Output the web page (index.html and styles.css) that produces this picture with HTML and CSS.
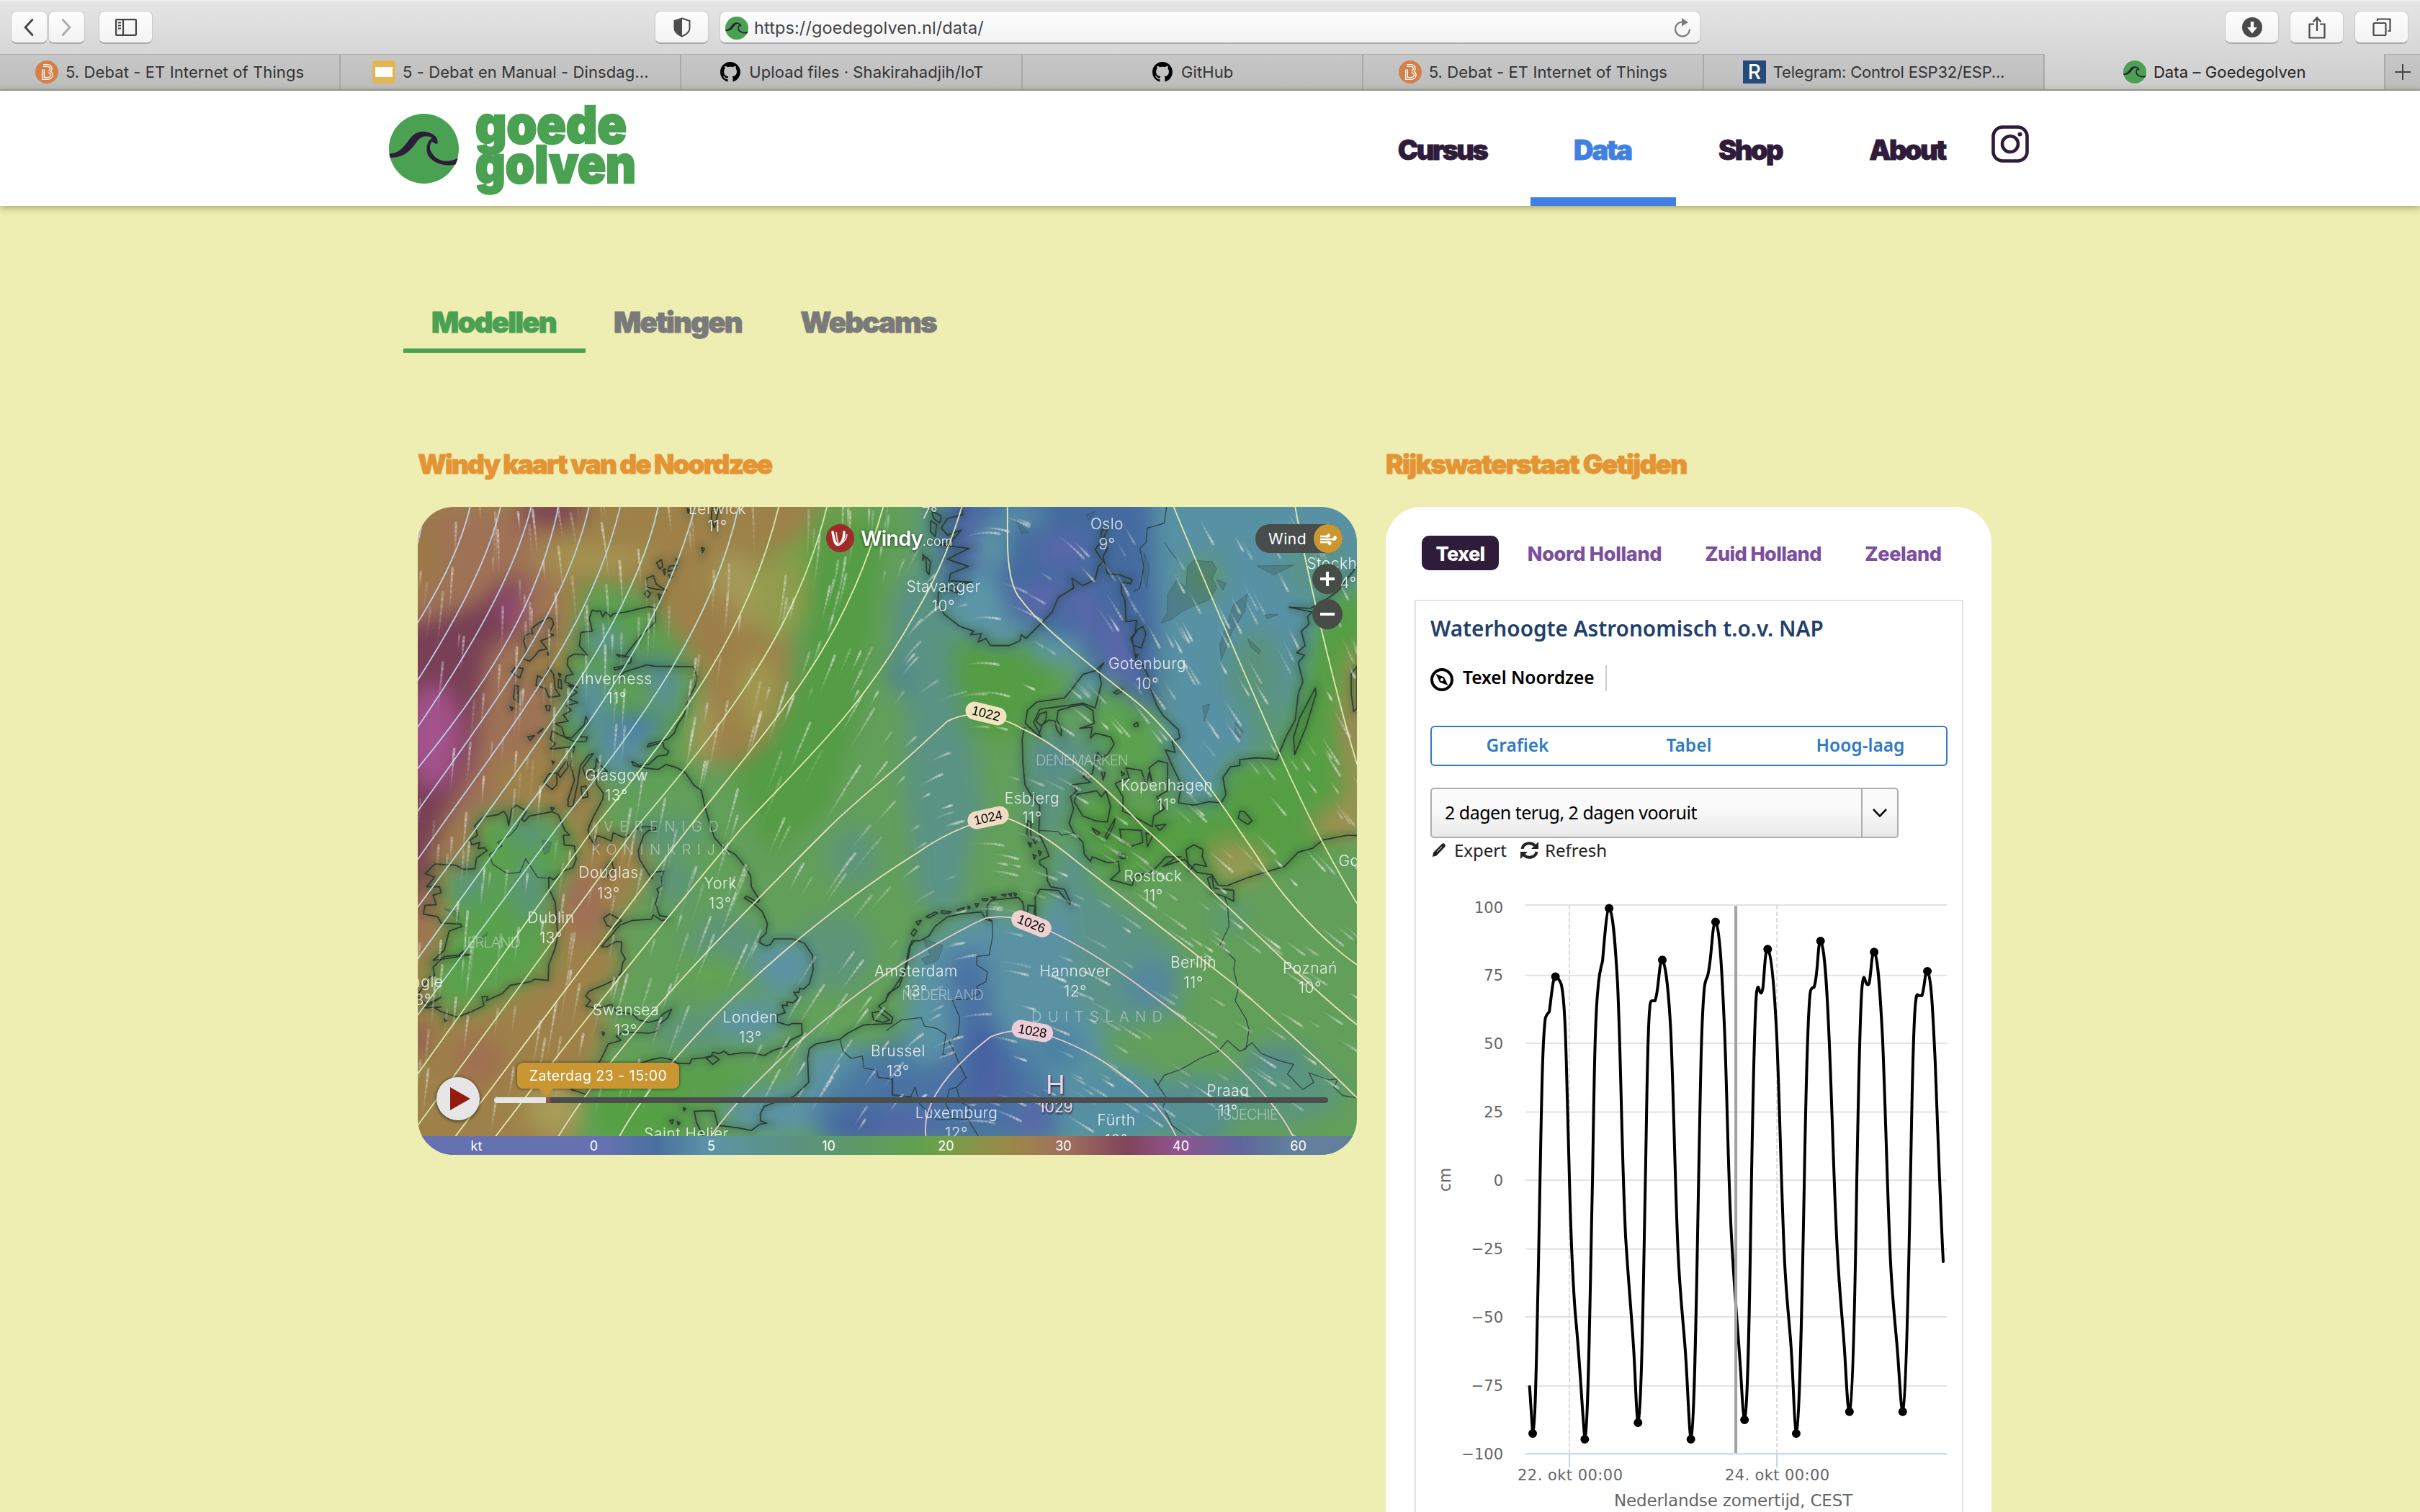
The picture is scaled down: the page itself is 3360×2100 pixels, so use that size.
FILE: index.html
```html
<!DOCTYPE html>
<html lang="nl">
<head>
<meta charset="utf-8">
<title>Data – Goedegolven</title>
<link rel="stylesheet" href="styles.css">
</head>
<body>
<svg width="0" height="0" class="defs">
  <defs>
    <symbol id="wave" viewBox="0 0 97 97">
      <circle cx="48.5" cy="48.5" r="48.5" fill="#4aa152"/>
      <path fill="#2f1b3a" d="M.5 55.5C14 55 20 47 28 36C36 25 44 24 51 25C62 27 69 33 67.5 41.5C65 42.5 62 40 59.5 38.500C56 44 56 50 60 55C66 65 80 70 96 61.500L92.500 70.500C76 74 60 68 54 57C51 49 52 39 60 33.500C55 30 46 30 40 37C32 48 24 61 1.500 61Z"/>
    </symbol>
    <symbol id="github" viewBox="0 0 16 16"><path d="M8 0C3.58 0 0 3.58 0 8c0 3.54 2.29 6.53 5.47 7.59.4.07.55-.17.55-.38 0-.19-.01-.82-.01-1.49-2.01.37-2.53-.49-2.69-.94-.09-.23-.48-.94-.82-1.13-.28-.15-.68-.52-.01-.53.63-.01 1.08.58 1.23.82.72 1.21 1.87.87 2.33.66.07-.52.28-.87.51-1.07-1.78-.2-3.64-.89-3.64-3.95 0-.87.31-1.59.82-2.15-.08-.2-.36-1.02.08-2.12 0 0 .67-.21 2.2.82.64-.18 1.32-.27 2-.27.68 0 1.36.09 2 .27 1.53-1.04 2.2-.82 2.2-.82.44 1.1.16 1.92.08 2.12.51.56.82 1.27.82 2.15 0 3.07-1.87 3.75-3.65 3.95.29.25.54.73.54 1.48 0 1.07-.01 1.93-.01 2.2 0 .21.15.46.55.38A8.01 8.01 0 0 0 16 8c0-4.42-3.58-8-8-8Z"/></symbol>
  </defs>
</svg>

<header class="toolbar">
  <div class="tools">
    <div class="pair">
      <button class="btn half" aria-label="Terug"><svg width="51" height="46" viewBox="0 0 51 46"><path d="M30 12L20 23L30 34" fill="none" stroke="#444" stroke-width="3" stroke-linecap="round"/></svg></button>
      <button class="btn half" aria-label="Vooruit"><svg width="51" height="46" viewBox="0 0 51 46"><path d="M20 12L30 23L20 34" fill="none" stroke="#aaa" stroke-width="3" stroke-linecap="round"/></svg></button>
    </div>
    <button class="btn side" aria-label="Navigatiekolom"><svg width="30" height="24" viewBox="0 0 30 24" fill="none" stroke="#444" stroke-width="2.200"><rect x="1.100" y="1.100" width="27.800" height="21.800" rx="1"/><path d="M11 1V23M4 5.500H8M4 9.500H8M4 13.500H8"/></svg></button>
  </div>
  <div class="address">
    <button class="btn side" aria-label="Privacy"><svg width="24" height="28" viewBox="0 0 24 28"><path d="M12 1.500L22.500 5V15C22.500 20 18 24 12 26.500C6 24 1.500 20 1.500 15V5Z" fill="none" stroke="#4d4d4d" stroke-width="2"/><path d="M12 1.500V26.500C6 24 1.500 20 1.500 15V5Z" fill="#4d4d4d"/></svg></button>
    <div class="url">
      <svg class="fav"><use href="#wave"/></svg>
      <span>https://goedegolven.nl/data/</span>
      <svg class="reload" width="26" height="28" viewBox="0 0 26 28"><path d="M12 5.500A10 10 0 1 0 23 15.500" fill="none" stroke="#7a7a7a" stroke-width="2.200"/><path d="M12 0L21 6L12 11.500Z" fill="#7a7a7a"/></svg>
    </div>
  </div>
  <div class="tools right">
    <button class="btn wide" aria-label="Downloads"><svg width="28" height="28" viewBox="0 0 28 28"><circle cx="14" cy="14" r="14" fill="#4a4a4a"/><path d="M11.800 6H16.200V14H21L14 22.500L7 14H11.800Z" fill="#fff"/></svg></button>
    <button class="btn wide" aria-label="Deel"><svg width="24" height="32" viewBox="0 0 24 32" fill="none" stroke="#4a4a4a" stroke-width="2.200"><path d="M8 11.500H1.500V30.500H22.500V11.500H16M12 21V3M6.500 8.500L12 2.500L17.500 8.500"/></svg></button>
    <button class="btn wide" aria-label="Tabbladen"><svg width="26" height="26" viewBox="0 0 26 26" fill="none" stroke="#4a4a4a" stroke-width="2.200"><rect x="1.500" y="7" width="17" height="17" rx="1.500"/><path d="M7 4V1.500H24.500V18H21.500"/></svg></button>
  </div>
</header>
<nav class="tabs">
  <div class="tab"><svg class="fav" viewBox="0 0 32 32"><circle cx="16" cy="16" r="16" fill="#d4804a"/><path d="M11 7H17C23 7 23 15 18 15.500C25 16 24 25 17 25H11V12.500" fill="none" stroke="#fff" stroke-width="4"/><path d="M11 7H17C23 7 23 15 18 15.500C25 16 24 25 17 25H11V12.500" fill="none" stroke="#d4804a" stroke-width="1.300"/></svg><span>5. Debat - ET Internet of Things</span></div>
  <div class="tab"><svg class="fav" viewBox="0 0 32 32"><rect width="32" height="32" rx="4" fill="#e3b653"/><rect x="4" y="9" width="24" height="14" fill="#fff"/></svg><span>5 - Debat en Manual - Dinsdag...</span></div>
  <div class="tab"><svg class="fav git"><use href="#github"/></svg><span>Upload files · Shakirahadjih/IoT</span></div>
  <div class="tab"><svg class="fav git"><use href="#github"/></svg><span>GitHub</span></div>
  <div class="tab"><svg class="fav" viewBox="0 0 32 32"><circle cx="16" cy="16" r="16" fill="#d4804a"/><path d="M11 7H17C23 7 23 15 18 15.500C25 16 24 25 17 25H11V12.500" fill="none" stroke="#fff" stroke-width="4"/><path d="M11 7H17C23 7 23 15 18 15.500C25 16 24 25 17 25H11V12.500" fill="none" stroke="#d4804a" stroke-width="1.300"/></svg><span>5. Debat - ET Internet of Things</span></div>
  <div class="tab tight"><i class="fav r">R</i><span>Telegram: Control ESP32/ESP...</span></div>
  <div class="tab current"><svg class="fav"><use href="#wave"/></svg><span>Data – Goedegolven</span></div>
  <div class="tab plus"><svg width="22" height="22" viewBox="0 0 22 22"><path d="M11 0V22M0 11H22" stroke="#444" stroke-width="2"/></svg></div>
</nav>

<div class="site-head">
  <a class="logo">
    <svg width="97" height="97"><use href="#wave"/></svg>
    <svg class="wordmark" width="228" height="130" viewBox="0 0 228 130"><text x="0" y="58" textLength="210" lengthAdjust="spacingAndGlyphs">goede</text><text x="0" y="112.500" textLength="223" lengthAdjust="spacingAndGlyphs">golven</text></svg>
  </a>
  <nav class="menu">
    <a class="m1">Cursus</a><a class="m2 active">Data</a><a class="m3">Shop</a><a class="m4">About</a>
    <svg class="insta" width="52" height="52" viewBox="0 0 52 52" fill="none" stroke="#2f1b3a"><rect x="2.500" y="2.500" width="47" height="47" rx="13" stroke-width="4.600"/><circle cx="26" cy="26" r="11" stroke-width="4.600"/><circle cx="39.500" cy="12.500" r="3" fill="#2f1b3a" stroke="none"/></svg>
  </nav>
</div>

<main>
  <nav class="subtabs"><a class="active s1">Modellen</a><a class="s2">Metingen</a><a class="s3">Webcams</a></nav>
  <div class="columns">
    <section class="left">
      <h2 class="h-windy">Windy kaart van de Noordzee</h2>
      <div class="map">
        <svg class="chartmap" width="1304" height="900" viewBox="580 704 1304 900">
          <defs>
            <filter id="soft" x="-10%" y="-10%" width="120%" height="120%" color-interpolation-filters="sRGB"><feGaussianBlur stdDeviation="15"/></filter>
            <filter id="glow" color-interpolation-filters="sRGB"><feGaussianBlur stdDeviation="5"/></filter>
            <g id="coast">
              <g transform="translate(570 690) scale(.44643 .33333)">
                <path d="M560 530L556 505L565 472L580 478L590 474L598 500L606 480L615 490L622 500L630 488L670 480L700 470L740 458L762 462L762 520L740 550L712 585L680 640L668 662L640 658L650 668L686 666L686 690L660 705L632 712L636 722L662 710L655 735L640 760L665 730L700 715L735 700L760 706L880 708L891 750L885 790L865 840L850 910L830 950L820 985L800 1010L770 1020L740 1030L736 1042L785 1022L788 1045L803 1060L797 1076L770 1080L740 1115L712 1120L688 1102L694 1120L740 1132L770 1136L795 1115L830 1130L855 1150L880 1200L905 1225L915 1290L930 1360L945 1420L975 1465L1010 1490L1040 1540L1058 1580L1060 1625L1085 1680L1080 1690L1045 1664L1038 1672L1070 1698L1095 1730L1110 1780L1105 1820L1088 1840L1086 1858L1106 1872L1120 1865L1130 1842L1190 1842L1225 1860L1250 1910L1252 1970L1240 2030L1222 2052L1210 2048L1208 2065L1192 2064L1205 2090L1190 2108L1170 2105L1172 2120L1155 2118L1165 2150L1140 2160L1140 2188L1175 2202L1185 2195L1216 2195L1218 2240L1180 2265L1170 2290L1130 2305L1100 2328L1060 2317L1030 2317L990 2325L975 2310L960 2320L940 2315L935 2330L910 2338L875 2342L868 2362L830 2360L810 2345L780 2337L750 2345L720 2358L690 2400L600 2450L560 2465L545 2490L520 2478L500 2470L560 2400L590 2350L615 2280L655 2265L640 2248L660 2230L740 2235L765 2228L772 2200L800 2170L812 2135L785 2155L770 2180L740 2190L710 2180L690 2155L640 2145L625 2115L600 2125L575 2130L545 2122L560 2100L545 2080L555 2060L600 2035L640 2010L655 1980L660 1940L668 1925L655 1895L657 1855L640 1853L610 1875L593 1875L620 1835L650 1785L690 1765L750 1760L755 1742L780 1765L798 1762L798 1750L775 1745L768 1720L762 1695L772 1650L766 1635L782 1620L780 1585L788 1560L755 1565L750 1592L740 1570L712 1510L708 1475L725 1410L740 1390L762 1388L762 1376L712 1374L690 1400L665 1420L630 1400L625 1435L600 1420L580 1412L572 1450L555 1415L552 1385L570 1330L598 1260L600 1235L580 1200L575 1150L612 1145L585 1110L578 1090L575 1130L555 1150L545 1165L535 1130L568 1070L555 1075L528 1120L520 1190L505 1290L490 1290L490 1260L510 1180L498 1120L510 1040L435 1052L450 1030L435 1010L440 975L460 990L480 1000L500 1005L540 950L545 915L552 935L545 960L525 1000L550 1000L545 1020L510 1020L480 1003L470 960L450 945L490 935L475 910L500 890L485 870L520 858L490 840L518 815L490 785L520 795L480 770L485 745L505 740L487 700L490 670L510 655L550 660L525 620L530 565L565 560Z"/>
                <path d="M440 510L445 530L430 570L445 575L425 590L405 600L425 635L400 640L385 665L370 685L350 675L360 640L352 600L358 575L380 568L375 550L400 525L430 503ZM325 710L350 715L340 755L315 730ZM325 785L335 790L333 855L320 840ZM430 712L445 740L450 800L465 830L430 835L420 800L390 785L395 745L415 760ZM485 1100L490 1125L465 1170L458 1150ZM455 1150V1200L440 1220L415 1190L430 1155ZM735 340L755 328L765 365L795 390L750 382L735 375ZM735 390L747 402L738 420L728 405ZM770 405L780 410L775 430ZM785 305L792 300L790 325ZM805 290L828 285L820 305L800 310ZM765 275L780 262L785 290L775 300ZM825 258L833 262L828 275ZM803 325L813 330L808 342ZM905 212L914 215L908 232ZM938 45L960 45L945 130L935 90ZM860 50L868 55L864 68ZM530 1210L545 1205L552 1250L535 1255ZM420 870L435 870L432 892L424 890ZM365 1000L385 995L372 1015ZM395 985L412 965L408 975ZM460 735L468 740L464 752ZM460 760L468 762L470 800L460 795ZM310 875L320 880L314 890ZM435 1295L448 1297L440 1307ZM425 648L431 652L428 660ZM440 1100L447 1105L442 1114ZM605 1545L625 1515L632 1550L610 1585ZM600 1755L620 1738L655 1765L630 1798L610 1785ZM920 2340L942 2328L960 2345L940 2365ZM596 2230L603 2235L599 2246ZM806 2600L818 2595L813 2613ZM830 2603L838 2610L832 2618ZM848 2545L856 2550L851 2558ZM105 2175L112 2182L107 2188Z"/>
                <path d="M475 1410L478 1450L510 1455L515 1510L505 1545L475 1560L445 1595L430 1585L430 1630L450 1690L458 1830L450 1880L430 1950L428 2015L385 2010L375 2020L310 2035L285 2070L235 2100L240 2082L222 2083L228 2120L190 2145L145 2168L95 2145L75 2130L95 2125L45 2130L95 2085L50 2115L20 2080L60 2000L75 1995L70 1960L105 1915L150 1910L165 1892L160 1905L188 1908L130 1920L70 1932L105 1890L120 1810L160 1790L155 1780L95 1776L85 1750L40 1738L45 1702L80 1700L70 1660L95 1650L90 1625L50 1625L75 1585L45 1570L75 1530L140 1535L165 1552L200 1550L205 1505L238 1475L230 1462L210 1465L215 1440L190 1450L185 1430L208 1410L200 1370L225 1335L270 1325L290 1310L300 1330L305 1370L315 1300L330 1285L360 1310L345 1345L355 1352L370 1330L440 1312L460 1325L480 1390L495 1410Z"/>
                <path d="M1568 1850L1555 1870L1545 1940L1530 2000L1520 2040L1485 2070L1478 2100L1455 2122L1500 2170L1495 2195L1410 2200L1360 2235L1335 2260L1260 2280L1240 2300L1235 2340L1238 2440L1215 2470L1190 2500L1140 2520L1100 2540L1088 2570V2600L1108 2610L1085 2615L1060 2640L1020 2630L965 2620L955 2622L945 2560L930 2558L882 2560L890 2610L910 2664M1435 2150L1455 2145L1490 2180L1470 2190L1440 2180Z"/>
              </g>
              <g transform="translate(1230 690) scale(.42729 .33333)">
                <path d="M245 42L250 75L200 90L180 130L200 160L245 138L210 190L175 200L270 215L230 240L200 260L268 290L210 320L205 350L280 355L215 370L240 405L190 380L170 400V450L190 490L240 540L285 560L275 575L310 570L300 605L325 590L340 620L400 620L435 600L440 575L455 590L510 520L540 480L560 420L610 380L605 340L640 370L680 345L690 290L705 270L680 220L698 190L700 140L722 130L708 170L720 215L705 250L720 320L760 325L800 345L795 362L765 355L765 400L777 430L780 520L815 515L810 560L835 540L845 570L830 630L805 620L795 590L820 550L800 590L812 680L830 690L850 740L860 800L880 870L900 910L950 970L955 1005L930 1020L940 1065L908 1055L930 1120L960 1200L950 1275L1000 1285L1050 1270L1090 1275L1105 1240L1095 1170L1120 1125L1150 1120V1095L1200 1088L1240 1090L1270 1095L1300 1000L1330 930L1340 820L1355 770L1340 690L1360 660L1335 650L1362 620L1350 560L1375 530L1370 500L1385 480L1310 460L1380 465L1440 420L1470 390L1500 340L1531 290"/>
                <path d="M453 945L460 890L490 855L580 838L605 800L640 740L680 725L708 692L692 725L700 780L680 880L640 860L600 868L560 875L500 885L480 940L495 975L505 1005ZM450 960L443 1010L445 1110L452 1200L470 1240L500 1290L497 1400L525 1480L530 1498L500 1515L500 1530L522 1550L525 1600L535 1625L580 1635L600 1690L598 1698L560 1640L500 1635L485 1670L487 1750L480 1750L485 1705L462 1702L460 1735L450 1730L445 1690L430 1670L345 1680L330 1700L328 1750L345 1768L325 1760L310 1730L250 1737L200 1750L160 1790L140 1830L110 1850L85 1850L75 1880L60 1980L30 2040L0 2090M495 1000L508 950L530 930L550 935L555 970L570 995V965L555 930L560 890L600 875L640 865L672 890L677 945L630 965L670 960L665 1005L680 985L730 1000L742 1030L720 1075L700 1085L688 1065L670 1155L640 1165L665 1190L605 1200L620 1225L600 1250L610 1300L595 1360L610 1400L640 1440L645 1490L665 1520L670 1500L720 1525L755 1520L760 1560L730 1595L800 1620L810 1580L860 1565L890 1530L910 1500L960 1500L940 1505L900 1540L970 1510L1010 1565L1060 1575L1080 1620L1110 1620L1180 1585L1295 1540L1340 1480L1385 1465L1420 1430L1500 1410L1531 1412M1045 1590L1060 1580L1065 1630L1130 1640L1130 1685L1100 1665L1060 1650Z"/>
                <path d="M620 1240L685 1225L700 1250L715 1225L730 1290L720 1355L680 1350L640 1330L612 1270ZM780 1130L830 1140L840 1180L848 1200L855 1150L865 1190L855 1130L885 1100L915 1110V1225L880 1250L905 1300L870 1330L865 1375L830 1350L795 1325L770 1310V1250L745 1195L790 1170ZM760 1385L830 1390L835 1440L800 1455L765 1430ZM745 1340L740 1370L718 1425L712 1415ZM845 1400L868 1410L850 1458ZM1150 1310L1165 1312L1190 1350L1175 1365L1145 1340ZM670 1380L695 1400L685 1410ZM700 1140L712 1150L706 1180ZM765 1145L775 1155L768 1163ZM875 1370L910 1365L890 1390ZM740 815L765 798L770 808L750 822ZM805 948L818 940L820 955L808 958ZM752 1485L775 1490L780 1505L765 1508ZM975 1470L1000 1450L1030 1470L1028 1500L1042 1540L1005 1530L985 1560ZM1395 797L1398 820L1365 960L1328 1075L1325 1000L1345 920ZM1531 705L1512 740V820L1520 895L1531 880ZM145 100L165 115L160 165L145 145ZM150 60L180 80L175 110L155 90ZM130 250L145 270L140 325L132 310ZM120 240L126 250L120 265ZM810 655L820 658L815 668ZM500 905L522 895L520 930L505 955L488 935ZM460 1350L472 1355L470 1420L458 1410ZM475 1420L492 1430L485 1445ZM462 1440L472 1445L470 1460ZM495 1475L505 1480L500 1495ZM478 1490L487 1495L482 1510ZM130 1750L160 1730L168 1735L140 1755ZM180 1725L212 1728L205 1735L180 1735ZM232 1720L255 1712L250 1725L235 1727ZM266 1705L274 1710L268 1718ZM290 1695L302 1695L295 1710ZM312 1675L332 1675L328 1682L315 1683ZM342 1668L358 1668L352 1676ZM376 1658L390 1656L388 1665ZM398 1655L408 1652L408 1665ZM415 1650L425 1655L420 1665ZM98 1770L115 1765L105 1785ZM82 1820L92 1800L100 1810L90 1830Z"/>
              </g>
            </g>
          </defs>
          <g filter="url(#soft)">
            <rect x="520" y="650" width="1420" height="1010" fill="#629f5a"/>
            <g transform="translate(570 690) scale(.44643 .33333)">
              <path fill="#9d8149" d="M-100 -100H1290L1240 150L1090 260L1080 420L1190 540L1170 900L1090 1130L900 1100L620 1130L600 1250L570 1400L720 1430L740 1560L700 1680L620 1780L640 1900L660 2000L560 2080L620 2200L560 2400L520 2500L500 2800H-100Z"/>
              <path fill="#9f7256" d="M60 50H300L420 150L470 560L330 700L440 800L440 1000L250 1150L300 1290L160 1400L80 1500H200L100 1300L0 1300V50Z"/>
              <path fill="#78a048" d="M1130 250L1290 60L1400 0V500L1250 560L1200 420Z"/>
              <path fill="#549c45" d="M1260 100H1480L1440 500L1400 900L1300 1300L1120 1500L1000 1150L1120 1000L1220 700L1240 400Z"/>
              <ellipse cx="1150" cy="420" rx="80" ry="180" fill="#909c4d"/><ellipse cx="1010" cy="400" rx="70" ry="170" fill="#a59b58"/>
              <ellipse cx="960" cy="560" rx="60" ry="160" fill="#9d7f49"/><ellipse cx="900" cy="950" rx="40" ry="150" fill="#a69b58"/><ellipse cx="1080" cy="820" rx="60" ry="160" fill="#a09850"/>
              <ellipse cx="560" cy="260" rx="180" ry="60" fill="#a49450"/>
              <path fill="#783f55" d="M-60 560L200 460L300 340H350L350 560L240 630L210 950L190 1130L120 1290L60 1500V1700H-60Z"/>
              <ellipse cx="440" cy="60" rx="110" ry="60" fill="#7b4054"/>
              <ellipse cx="310" cy="470" rx="26" ry="80" fill="#9b4c84"/>
              <ellipse cx="70" cy="1000" rx="90" ry="220" fill="#a3528c"/>
              <ellipse cx="40" cy="250" rx="60" ry="160" fill="#9b7848"/>
              <path fill="#5c9f50" d="M545 350L720 380L770 480L860 640L900 760L860 1100L800 1180L600 1220L500 1080L450 1000L480 780L500 600Z"/>
              <g fill="#5a8f9f"><ellipse cx="600" cy="600" rx="60" ry="50"/><ellipse cx="560" cy="860" rx="60" ry="130"/><ellipse cx="650" cy="1060" rx="90" ry="110"/><ellipse cx="790" cy="800" rx="45" ry="100"/><ellipse cx="730" cy="700" rx="100" ry="30" fill="#4f7f96"/><ellipse cx="700" cy="955" rx="90" ry="50" fill="#4a7cab"/></g>
              <path fill="#5aa14e" d="M210 1310H460L520 1480L440 1700L430 1980L230 2120L90 2160L60 2000L120 1800L90 1560L200 1520Z"/>
              <g fill="#5a937f"><ellipse cx="370" cy="1400" rx="60" ry="60"/><ellipse cx="370" cy="1640" rx="50" ry="120"/><ellipse cx="180" cy="1620" rx="50" ry="80"/></g>
              <ellipse cx="540" cy="1700" rx="60" ry="150" fill="#a06e58"/><ellipse cx="30" cy="1760" rx="30" ry="160" fill="#a06a58"/>
              <ellipse cx="210" cy="2350" rx="80" ry="110" fill="#a07050"/><ellipse cx="25" cy="2260" rx="25" ry="80" fill="#8b4d54"/>
              <ellipse cx="450" cy="2560" rx="90" ry="110" fill="#a79b57"/>
              <g fill="#5d957a"><ellipse cx="820" cy="1600" rx="60" ry="110"/><ellipse cx="980" cy="1870" rx="120" ry="130"/><ellipse cx="880" cy="2230" rx="120" ry="90"/><ellipse cx="1380" cy="1500" rx="80" ry="130"/><ellipse cx="1320" cy="1900" rx="120" ry="160"/><ellipse cx="800" cy="1400" rx="120" ry="60"/></g>
              <g fill="#5c93a4"><ellipse cx="1160" cy="1960" rx="90" ry="120"/><ellipse cx="1060" cy="2180" rx="110" ry="90"/><ellipse cx="1330" cy="2400" rx="120" ry="170"/><ellipse cx="1150" cy="2560" rx="180" ry="100"/></g>
              <ellipse cx="930" cy="1980" rx="90" ry="70" fill="#62a453"/><ellipse cx="900" cy="2440" rx="180" ry="90" fill="#5aa04c"/><ellipse cx="700" cy="2550" rx="150" ry="150" fill="#55a044"/>
              <ellipse cx="1330" cy="2200" rx="120" ry="90" fill="#62a25a"/>
              <path fill="#4a78a2" d="M1400 2330L1600 2200V2700H1280L1250 2560Z"/><ellipse cx="1430" cy="2620" rx="130" ry="70" fill="#4863a0"/><ellipse cx="1500" cy="2640" rx="60" ry="50" fill="#6368ae"/>
              <ellipse cx="1550" cy="600" rx="50" ry="280" fill="#578f88"/><ellipse cx="1530" cy="740" rx="50" ry="60" fill="#4e8294"/>
            </g>
            <g transform="translate(1230 690) scale(.42729 .33333)">
              <path fill="#5a9383" d="M110 0H250L230 600L320 1300L200 1700H100L60 1200L80 600Z"/>
              <path fill="#456aa0" d="M180 -50H900L880 900L820 860L700 740L520 560L400 640L250 580L180 400Z"/>
              <path fill="#5891a3" d="M860 -50H1600V350L1420 420L1340 800L1280 1060L1120 1100L1080 1290L960 1270L900 960Z"/>
              <g fill="#5c96a6"><ellipse cx="430" cy="80" rx="90" ry="45"/><ellipse cx="340" cy="210" rx="60" ry="100"/><ellipse cx="300" cy="450" rx="90" ry="140"/><ellipse cx="400" cy="560" rx="70" ry="60"/><ellipse cx="560" cy="640" rx="90" ry="60"/><ellipse cx="660" cy="760" rx="50" ry="60"/></g>
              <g fill="#6266ad"><ellipse cx="570" cy="220" rx="70" ry="50"/><ellipse cx="510" cy="420" rx="90" ry="50"/><ellipse cx="650" cy="470" rx="30" ry="120"/><ellipse cx="740" cy="610" rx="34" ry="110"/><ellipse cx="790" cy="720" rx="34" ry="70"/><ellipse cx="270" cy="160" rx="26" ry="160" fill="#5560a6"/></g>
              <g fill="#609a68"><ellipse cx="1030" cy="340" rx="60" ry="90"/><ellipse cx="1200" cy="740" rx="90" ry="180" fill="#5a937c"/><ellipse cx="1240" cy="960" rx="60" ry="120" fill="#5c977a"/><ellipse cx="1400" cy="300" rx="110" ry="120" fill="#5a9388"/></g>
              <path fill="#549d43" d="M210 600L450 630L590 770L480 850L440 950L430 1020L260 980L230 760Z"/>
              <path fill="#5b9280" d="M470 980H640L720 1060L660 1180L600 1250L580 1420L480 1400L440 1200Z"/>
              <ellipse cx="640" cy="820" rx="40" ry="50" fill="#5c93a2"/><ellipse cx="540" cy="1080" rx="60" ry="70" fill="#558a90"/>
              <path fill="#59a24d" d="M700 860L780 850L900 1020L900 1090L780 1120L700 1020Z"/>
              <path fill="#559e44" d="M1100 1130L1280 1100L1350 850L1410 460L1550 380V1420L1300 1540L1100 1620L960 1500L720 1580L600 1360L700 1240L880 1320L1000 1300L1080 1290Z"/>
              <path fill="#9f9152" d="M1500 640L1560 640V1430L1400 1420L1380 1340L1490 1260L1470 950Z"/>
              <ellipse cx="1520" cy="960" rx="26" ry="90" fill="#a87c5a"/><ellipse cx="1150" cy="1530" rx="90" ry="80" fill="#9a9a52"/><ellipse cx="1110" cy="1470" rx="60" ry="40" fill="#9c9450"/>
              <g fill="#5a938a"><ellipse cx="200" cy="1550" rx="60" ry="200"/><ellipse cx="600" cy="1560" rx="60" ry="110"/></g>
              <path fill="#5a92a4" d="M80 1880L330 1720L480 1780L560 1640L640 1700L640 2000L720 2300L700 2700H300L60 2300Z"/>
              <path fill="#5b9389" d="M600 1560L800 1740L960 1900L960 2150L760 2220L620 2100Z"/>
              <ellipse cx="860" cy="2030" rx="80" ry="90" fill="#5587a0"/><ellipse cx="1270" cy="2340" rx="100" ry="50" fill="#53869a"/><ellipse cx="1120" cy="1760" rx="60" ry="40" fill="#5a9682"/>
              <ellipse cx="1280" cy="2480" rx="200" ry="130" fill="#5a957f"/><ellipse cx="1000" cy="2560" rx="140" ry="150" fill="#568f90"/>
              <ellipse cx="760" cy="2540" rx="160" ry="170" fill="#548fa2"/>
              <path fill="#4a72a4" d="M200 1900H320L360 2240L440 2300L480 2400L560 2480L560 2700H-40V2430L160 2360L230 2300Z"/>
              <g fill="#4560a0"><ellipse cx="320" cy="2290" rx="60" ry="100"/><ellipse cx="330" cy="2450" rx="80" ry="80"/><ellipse cx="30" cy="2640" rx="120" ry="60"/></g>
              <g fill="#6066ac"><ellipse cx="60" cy="2630" rx="110" ry="30"/><ellipse cx="350" cy="2440" rx="32" ry="30"/><ellipse cx="470" cy="2610" rx="50" ry="60"/></g>
              <ellipse cx="550" cy="2300" rx="90" ry="100" fill="#4d83a3"/>
            </g>
          </g>
          <use href="#coast" class="coast-glow" filter="url(#glow)"/>
          <use href="#coast" class="coast"/>
          <g class="border">
            <path transform="translate(570 690) scale(.44643 .33333)" d="M340 1350L330 1380L310 1410L270 1440L285 1455L245 1490L255 1530L300 1570L340 1565L358 1508L395 1585L430 1590M1335 2260L1345 2310L1370 2340L1405 2330L1410 2380L1450 2390L1455 2420L1500 2425V2495L1560 2500"/>
            <path transform="translate(1230 690) scale(.42729 .33333)" d="M912 42L905 110L850 130L845 190L825 215L838 290L825 380L805 395M500 1390L560 1395L570 1410L610 1400M1100 1665L1110 1700L1115 1790L1085 1870L1135 1930L1130 1970L1145 2050L1135 2100L1170 2175L1180 2220L1170 2300L1150 2310L1110 2265L1100 2280L1080 2310L1020 2340L960 2385L905 2410L885 2450L870 2425L915 2510L900 2540L930 2620L980 2664M1155 2310L1190 2275L1220 2320L1280 2350L1325 2365L1305 2405L1355 2470L1390 2440L1375 2400L1440 2430L1470 2425L1455 2460L1485 2495L1531 2505M345 1768L347 1830L335 1910L295 1915V1950L330 1980L325 2020L295 2040L305 2070L260 2095L215 2095L240 2170L235 2240L205 2270L225 2320L185 2325L195 2240L165 2215L125 2205L115 2170L50 2180L0 2225M225 2320L240 2370L260 2420L230 2460L240 2520L270 2540L265 2590L300 2664M230 2460L205 2470L195 2530L215 2590L265 2595M0 2420L20 2430V2490L80 2500L95 2460L110 2530L165 2595L215 2595"/>
          </g>
          <g class="lake">
            <path transform="translate(1230 690) scale(.42729 .33333)" d="M980 290L1000 265L1060 270L1075 300L1060 340L1075 380L1050 430L990 460L960 480L930 510L895 525L915 480L915 410L945 345L975 380ZM1175 405L1165 480L1125 560L1090 680L1085 620L1110 520L1130 450ZM1205 288L1325 285L1260 325ZM1075 345L1105 360L1095 390ZM1030 870L1052 865L1035 935ZM1135 940L1162 980L1150 1005L1135 990ZM1175 590L1218 640L1212 655L1185 625ZM905 190L945 260L930 240ZM840 235L855 290L848 380L836 320ZM420 95L465 150L440 150ZM650 75L680 60L660 100ZM1232 492L1275 490L1240 508ZM120 1840L185 1870L170 1930L130 1950L115 1925L145 1910Z"/>
            <path transform="translate(570 690) scale(.44643 .33333)" d="M410 1430L438 1440L430 1480L415 1490ZM105 1715L150 1730L150 1760L125 1735ZM215 1840L240 1815L230 1850Z"/>
          </g>
          <g class="iso" transform="translate(570 690) scale(.44643 .33333)">
            <g stroke="#bcd0e6"><path d="M48 42L22 195M185 42Q150 250 22 525M280 42Q230 330 22 765M375 42Q310 400 22 960M460 42C400 430 250 760 22 1132M555 42C480 480 260 860 22 1310M652 42C560 560 300 980 22 1512"/></g>
            <g stroke="#b9dfd8"><path d="M770 42C700 480 440 940 205 1380L22 1710M885 42C800 480 600 880 315 1380L22 1925M1020 42C940 520 740 900 455 1380L22 2160"/></g>
            <g stroke="#cdecae"><path d="M1145 42C1050 560 850 920 570 1380L22 2405M1295 42C1200 560 980 940 700 1380L22 2620"/></g>
            <g stroke="#e6e9ae"><path d="M1470 42C1350 620 1150 900 865 1380C650 1750 400 2200 140 2664M1568 490C1400 900 1200 1130 1030 1380C800 1750 500 2250 265 2664"/></g>
            <g stroke="#eadfc0"><path d="M1568 1060C1480 1170 1390 1260 1300 1380C1000 1780 650 2250 460 2664M1568 1490C1200 1800 800 2300 650 2664"/></g>
            <path stroke="#e8cccb" d="M1568 1915C1350 2080 1040 2450 935 2664"/>
          </g>
          <g class="iso" transform="translate(1230 690) scale(.42729 .33333)">
            <g stroke="#e6e9ae"><path d="M247 42C200 240 150 370 94 490M395 42V170C395 300 410 390 440 430C500 540 700 740 800 840C900 940 1000 1120 1090 1280L1207 1500C1300 1700 1450 1880 1531 1950"/></g>
            <g stroke="#dcecae"><path d="M935 42C1050 400 1180 780 1283 1080C1360 1300 1430 1480 1531 1695M1330 42C1380 400 1480 900 1531 1115"/></g>
            <g stroke="#ecdfbc"><path d="M94 1060L200 935Q240 908 300 905Q400 930 440 965C560 1030 700 1190 840 1380C1000 1560 1350 2020 1531 2200M94 1490C160 1430 220 1390 290 1360Q330 1330 400 1342Q500 1390 620 1520C800 1700 1000 1900 1130 2030C1300 2220 1450 2400 1531 2505"/></g>
            <g stroke="#e8cccb"><path d="M94 1915C180 1850 280 1780 325 1755Q400 1740 460 1770C650 1860 850 2060 1000 2210C1150 2370 1270 2530 1323 2664M130 2664C115 2530 200 2390 340 2250Q400 2220 430 2228L540 2250C700 2320 880 2490 943 2664"/></g>
          </g>
        </svg>
        <canvas class="wind" width="1304" height="874"></canvas>
        <svg class="labels" width="1304" height="874" viewBox="580 704 1304 874">
          <g class="pill"><g transform="translate(1369 991) rotate(14)"><rect x="-29" y="-12.500" width="58" height="25" rx="12.500" fill="#efe6c0"/><text y="6">1022</text></g>
          <g transform="translate(1372 1135.700) rotate(-12)"><rect x="-29" y="-12.500" width="58" height="25" rx="12.500" fill="#f0dcc4"/><text y="6">1024</text></g>
          <g transform="translate(1432 1283) rotate(22)"><rect x="-29" y="-12.500" width="58" height="25" rx="12.500" fill="#efd1d2"/><text y="6">1026</text></g>
          <g transform="translate(1433.400 1432) rotate(10)"><rect x="-29" y="-12.500" width="58" height="25" rx="12.500" fill="#edccd8"/><text y="6">1028</text></g></g>
          <g class="country"><text x="838" y="1155" textLength="160">VERENIGD</text><text x="821" y="1187" textLength="193">KONINKRIJK</text><text x="644" y="1316" textLength="79">IERLAND</text><text x="1438" y="1063" textLength="129">DENEMARKEN</text><text x="1252" y="1389" textLength="114">NEDERLAND</text><text x="1432" y="1419" textLength="182">DUITSLAND</text><text x="1686" y="1555" textLength="89">TSJECHIË</text></g>
          <g class="city">
            <text x="996" y="714">Lerwick</text><text x="996" y="738">11°</text><text x="1291" y="720">7°</text>
            <text x="856" y="950">Inverness</text><text x="856" y="977">11°</text><text x="856" y="1084">Glasgow</text><text x="856" y="1112">13°</text>
            <text x="1537" y="735">Oslo</text><text x="1537" y="763">9°</text><text x="1310" y="822">Stavanger</text><text x="1310" y="849">10°</text>
            <text x="1593" y="929">Gotenburg</text><text x="1593" y="957">10°</text><text x="1620" y="1098">Kopenhagen</text><text x="1620" y="1125">11°</text>
            <text x="1433" y="1116">Esbjerg</text><text x="1433" y="1143">11°</text><text x="1868" y="790">Stockholm</text><text x="1872" y="817">4°</text>
            <text x="845" y="1219">Douglas</text><text x="845" y="1248">13°</text><text x="1000" y="1234">York</text><text x="1000" y="1262">13°</text>
            <text x="765" y="1282">Dublin</text><text x="765" y="1310">13°</text><text x="869" y="1410">Swansea</text><text x="869" y="1438">13°</text>
            <text x="1042" y="1420">Londen</text><text x="1042" y="1448">13°</text><text x="1247" y="1467">Brussel</text><text x="1247" y="1495">13°</text>
            <text x="1272" y="1356">Amsterdam</text><text x="1272" y="1384">13°</text><text x="1493" y="1356">Hannover</text><text x="1493" y="1384">12°</text>
            <text x="1657" y="1344">Berlijn</text><text x="1657" y="1372">11°</text><text x="1819" y="1352">Poznań</text><text x="1819" y="1379">10°</text>
            <text x="1601" y="1224">Rostock</text><text x="1601" y="1251">11°</text><text x="1705" y="1522">Praag</text><text x="1705" y="1550">11°</text>
            <text x="1328" y="1553">Luxemburg</text><text x="1328" y="1581">12°</text><text x="1550" y="1563">Fürth</text><text x="1550" y="1591">10°</text>
            <text x="953" y="1582">Saint Helier</text><text x="1897" y="1203">Gdańsk</text><text x="583" y="1371">Dingle</text><text x="583" y="1396">13°</text>
          </g>
          <g class="high"><text x="1465.500" y="1519" font-size="36">H</text><text x="1466" y="1545" font-size="21">1029</text></g>
        </svg>
        <div class="brand"><svg width="39" height="39" viewBox="0 0 39 39"><circle cx="19.500" cy="19.500" r="19.500" fill="#a02a28"/><path d="M9 11C11 20 12 28 16 28.500C22 28 25 20 25 11" fill="none" stroke="#fff" stroke-width="3.500" stroke-linecap="round"/><path d="M14 11C15 20 16 25 17 28C24 27 28 21 29 14" fill="none" stroke="#f0c8c8" stroke-width="2"/></svg><b>Windy</b><small>.com</small></div>
        <div class="layer"><span>Wind</span><svg width="40" height="40" viewBox="0 0 40 40"><circle cx="20" cy="20" r="20" fill="#c99632"/><path d="M9 17H19.500M9 21H29M9 25H21" stroke="#fff" stroke-width="2.400"/><path d="M18 17C21 17 22 15.500 20.500 15M27 21C30.500 21 31 18 29 18M20 25C23.500 25 23.500 27 22 27.500" fill="none" stroke="#fff" stroke-width="3.500" stroke-linecap="round"/></svg></div>
        <div class="zoomers"><i><svg width="22" height="22" viewBox="0 0 22 22"><path d="M11 1V21M1 11H21" stroke="#fff" stroke-width="4"/></svg></i><i><svg width="22" height="22" viewBox="0 0 22 22"><path d="M1 11H21" stroke="#fff" stroke-width="4"/></svg></i></div>
        <div class="play"><svg width="28" height="32" viewBox="0 0 28 32"><path d="M0 0L28 16L0 32Z" fill="#951b11"/></svg></div>
        <div class="track"><i class="done"></i><i class="now"></i></div>
        <div class="stamp">Zaterdag 23 - 15:00</div>
        <div class="legend"><span>kt</span><span>0</span><span>5</span><span>10</span><span>20</span><span>30</span><span>40</span><span>60</span></div>
      </div>
    </section>
    <section class="right-col">
      <h2 class="h-rws">Rijkswaterstaat Getijden</h2>
      <div class="card">
        <nav class="regions"><a class="on">Texel</a><a>Noord Holland</a><a>Zuid Holland</a><a>Zeeland</a></nav>
        <div class="frame">
          <h3>Waterhoogte Astronomisch t.o.v. NAP</h3>
          <div class="place"><svg width="32" height="32" viewBox="0 0 32 32"><circle cx="16" cy="16" r="14" fill="none" stroke="#000" stroke-width="4"/><path d="M7.500 8L19 12.500L24.500 24L13 19.500Z"/><circle cx="16" cy="16" r="2.200" fill="#fff"/></svg><span>Texel Noordzee</span></div>
          <div class="seg"><span>Grafiek</span><span>Tabel</span><span>Hoog-laag</span></div>
          <div class="select"><span>2 dagen terug, 2 dagen vooruit</span><i><svg width="20" height="12" viewBox="0 0 20 12"><path d="M1 1L10 10.500L19 1" fill="none" stroke="#111" stroke-width="2.600"/></svg></i></div>
          <div class="links">
            <svg width="20" height="21" viewBox="0 0 20 21"><path d="M1 20L2 14L13.500 2.500Q16 0 18 2.500Q20 4.500 17.500 7L6.500 18.500Z" fill="#222"/><path d="M7 13L14 6" stroke="#fff" stroke-width="1"/></svg><span class="ex">Expert</span>
            <svg class="rf" width="25" height="24" viewBox="0 0 25 24"><path d="M2.500 10C4 1.500 15 0 20 5.500M22.500 14C21 22.500 10 24 5 18.500" fill="none" stroke="#222" stroke-width="4"/><path d="M25 0V10H15ZM0 24V14H10Z" fill="#222"/></svg><span class="re">Refresh</span>
          </div>
          <svg class="graph" width="752" height="842" viewBox="1968 1222 752 842">
            <g transform="translate(1940 1220) scale(.53571 .56122)" fill="none">
              <path class="ns" stroke="#e2e2e2" stroke-width="2" d="M332 66H1425M332 240H1425M332 408H1425M332 578H1425M332 747H1425M332 917H1425M332 1085H1425M332 1256H1425"/>
              <path class="ns" stroke="#dadada" stroke-width="2" stroke-dasharray="6 3" d="M446 66V1424M984 66V1424"/>
              <path class="ns" stroke="#c5d3ec" stroke-width="2" d="M332 1424H1425M446 1424V1458M984 1424V1458"/>
              <path class="ns" stroke="#000" stroke-width="4" stroke-linecap="round" stroke-linejoin="round" d="M343 1258L351 1374C358 1370 361 1170 365 1000L370 747C374 560 376 400 384 345Q386 338 394 330C400 290 403 245 410 243Q418 245 425 262C437 310 438 470 445 700C450 900 455 1010 463 1095C472 1180 478 1300 486 1388C495 1380 500 1000 506 747C510 520 512 350 520 275Q523 235 532 205C537 150 543 75 549 74C560 80 566 180 571 260C580 450 582 700 592 890C600 1010 608 1090 613 1170C618 1250 620 1340 624 1347C633 1330 638 1000 643 747C647 560 648 390 654 325Q655 304 659 303H668C678 280 678 205 687 202C696 210 704 290 709 380C716 530 720 760 728 930C734 1050 743 1110 748 1190C754 1280 757 1380 761 1388C770 1380 776 1000 781 747C786 500 788 350 796 270Q798 254 803 245C815 215 815 110 825 108C836 120 842 240 848 370C855 530 858 760 867 900C875 1040 884 1130 890 1220C894 1280 896 1335 900 1340C909 1330 914 1000 918 747C922 550 925 350 931 285Q934 262 937 272Q944 297 948 268C952 230 953 178 960 175C970 185 978 280 984 400C991 560 996 790 1004 950C1010 1060 1018 1110 1022 1180C1027 1260 1030 1370 1034 1374C1043 1365 1050 1000 1055 747C1059 530 1063 350 1070 285Q1072 268 1080 270C1091 240 1089 160 1097 155C1108 165 1114 280 1119 390C1127 560 1132 780 1141 930C1148 1050 1155 1100 1160 1180C1165 1260 1167 1315 1172 1320C1181 1310 1187 1000 1191 747C1195 550 1198 360 1204 275Q1208 233 1212 250Q1218 270 1223 260C1229 230 1229 184 1236 182C1246 190 1252 290 1258 400C1265 560 1271 800 1278 940C1284 1060 1293 1120 1298 1190C1303 1260 1306 1316 1310 1320C1318 1310 1325 1000 1330 747C1334 570 1336 380 1343 310Q1346 280 1350 290H1360C1367 270 1367 232 1374 230C1384 240 1388 330 1394 450C1400 600 1407 800 1415 948"/>
              <path class="ns" stroke="#a2a2a2" stroke-width="4" d="M877.500 68V1422"/>
              <path class="ns" stroke="#000" stroke-width="12" stroke-linecap="round" d="M351 1374h.01M486 1388h.01M624 1347h.01M761 1388h.01M900 1340h.01M1034 1374h.01M1172 1320h.01M1310 1320h.01M410 243h.01M549 74h.01M687 202h.01M825 108h.01M960 175h.01M1097 155h.01M1236 182h.01M1374 230h.01"/>
            </g>
            <g class="axis" text-anchor="end"><text x="2087" y="1268">100</text><text x="2087" y="1362">75</text><text x="2087" y="1457">50</text><text x="2087" y="1552">25</text><text x="2087" y="1647">0</text><text x="2087" y="1742">−25</text><text x="2087" y="1837">−50</text><text x="2087" y="1932">−75</text><text x="2087" y="2027">−100</text></g>
            <g class="axis"><text x="2107" y="2056" textLength="146">22. okt 00:00</text><text x="2395" y="2056" textLength="145">24. okt 00:00</text><text class="big" transform="translate(2014 1655) rotate(-90)" textLength="33" lengthAdjust="spacingAndGlyphs">cm</text></g>
          </svg>
          <p class="zone">Nederlandse zomertijd, CEST</p>
        </div>
      </div>
    </section>
  </div>
</main>
<script src="wind.js"></script>
</body>
</html>
```
FILE: styles.css
```css
* { box-sizing: border-box; }
body { margin: 0; height: 2100px; overflow: hidden; background: #eeedb2; font-family: Inter, "Liberation Sans", sans-serif; color: #2f1b3a; }
.defs { position: absolute; }
button { padding: 0; font: inherit; }
h2, h3, p { margin: 0; }

.toolbar { height: 75px; padding: 15px 16px 0 15px; display: grid; grid-template-columns: 894px 1452px 1fr; align-items: start; background: linear-gradient(#f4f4f4 0, #e5e5e5 3px, #d6d6d6 100%); }
.tools, .pair, .address { display: flex; }
.tools { gap: 19px; }
.tools.right { gap: 15px; justify-content: flex-end; }
.pair { gap: 1px; }
.btn { height: 46px; border: 1px solid #c9c9c9; border-bottom: 2px solid #a9a9a9; border-radius: 8px; background: linear-gradient(#fefefe, #f2f2f2); display: flex; align-items: center; justify-content: center; }
.half { width: 51px; }
.side { width: 75px; }
.wide { width: 75px; }
.address { gap: 15px; }
.url { width: 1362px; height: 46px; border: 1px solid #c9c9c9; border-bottom: 2px solid #a9a9a9; border-radius: 8px; background: linear-gradient(#fefefe, #f2f2f2); display: flex; align-items: center; padding: 2px 11px 0 7px; gap: 8px; font-size: 23.500px; letter-spacing: .1px; color: #444; }
.url .reload { margin-left: auto; }
.fav { width: 32px; height: 32px; flex: none; }
.tabs { height: 51px; border-top: 1px solid #acacac; border-bottom: 2px solid #a3a3a3; background: linear-gradient(#c7c7c7, #bdbdbd); display: grid; grid-template-columns: repeat(7, 473.200px) 1fr; }
.tab { display: flex; align-items: center; justify-content: center; gap: 10px; border-right: 2px solid #a9a9a9; font-size: 22px; letter-spacing: .1px; color: #333; white-space: nowrap; }
.tab.tight { letter-spacing: -.2px; }
.tab.current { background: linear-gradient(#d6d6d6, #cdcdcd); color: #222; margin-top: -1px; }
.tab.plus { border: 0; }
.git { padding: 2px; }
.fav.r { background: #24497a; color: #fff; font: 500 28px/32px Inter, sans-serif; text-align: center; }

.site-head { position: relative; height: 160px; background: #fff; box-shadow: 0 2px 10px rgba(60, 60, 0, .45); display: flex; justify-content: space-between; padding: 0 543px 0 540px; }
.logo { display: flex; align-items: center; gap: 23px; }
.wordmark { font-size: 72px; font-weight: 900; fill: #4aa152; stroke: #4aa152; stroke-width: 2.600; overflow: visible; }
.menu { display: flex; }
.menu a { height: 160px; line-height: 164px; text-align: center; font-size: 38px; font-weight: 900; letter-spacing: -2.600px; text-indent: -2px; white-space: nowrap; -webkit-text-stroke: .8px; }
.menu .m1 { width: 243px; }
.menu .m2 { width: 202px; border-bottom: 12px solid #3f80e2; color: #3f80e2; letter-spacing: -2.100px; }
.menu .m3 { width: 208px; }
.menu .m4 { width: 228px; }
.insta { margin: 48px 0 0 2px; }

main { padding: 111px 594px 0 560px; }
.subtabs { display: flex; height: 93px; }
.subtabs a { text-align: center; line-height: 102px; font-size: 40px; font-weight: 900; letter-spacing: -1.800px; text-indent: -2px; color: #7a7a7a; -webkit-text-stroke: .9px; white-space: nowrap; }
.subtabs a.active { color: #4aa152; border-bottom: 6px solid #4aa152; }
.s1 { width: 253px; } .s2 { width: 258px; } .s3 { width: 271px; }
.columns { display: flex; gap: 40px; padding: 129px 0 0 20px; }
h2 { height: 85px; line-height: 51px; font-size: 37px; font-weight: 900; color: #e59434; letter-spacing: -2px; white-space: nowrap; -webkit-text-stroke: .8px; }
.h-rws { letter-spacing: -1.700px; }

.map { position: relative; width: 1304px; height: 900px; border-radius: 50px; overflow: hidden; }
.chartmap { display: block; }
.chartmap path { vector-effect: non-scaling-stroke; }
.coast { fill: none; stroke: #2a3a30; stroke-width: 1.700; stroke-linejoin: round; }
.coast-glow { fill: none; stroke: #1b3a2a; stroke-width: 9; opacity: .24; }
.border { fill: none; stroke: #2c4040; stroke-width: 1.200; }
.lake { fill: rgba(60, 95, 95, .35); stroke: rgba(40, 70, 75, .4); stroke-width: 1; }
.iso { fill: none; stroke-width: 1.800; }
.wind, .labels { position: absolute; left: 0; top: 0; }
.labels text { text-anchor: middle; }
.pill text { font: 18px "Liberation Sans", sans-serif; fill: #000; }
.labels .country text { text-anchor: start; font-size: 20px; font-weight: 300; fill: rgba(255, 255, 255, .42); }
.city { font-size: 21px; font-weight: 300; letter-spacing: .5px; fill: rgba(255, 255, 255, .85); }
.high { fill: #f6d2e2; filter: drop-shadow(1px 2px 1px rgba(0, 0, 0, .6)); }
.brand { position: absolute; left: 567px; top: 24px; height: 39px; display: flex; align-items: center; color: #fff; text-shadow: 0 1px 4px rgba(0, 0, 0, .6); }
.brand b { margin-left: 9px; font-size: 29px; font-weight: 600; letter-spacing: -.9px; }
.brand small { font-size: 18px; font-weight: 300; padding-top: 7px; }
.layer { position: absolute; left: 1163px; top: 24px; width: 121px; height: 40px; border-radius: 20px; background: #484c4a; display: flex; align-items: center; justify-content: space-between; padding-left: 18px; color: #fff; font-size: 21px; letter-spacing: .5px; }
.zoomers { position: absolute; left: 1242px; top: 79px; display: grid; gap: 7px; }
.zoomers i { width: 42px; height: 42px; border-radius: 50%; background: #474c46; display: flex; align-items: center; justify-content: center; }
.play { position: absolute; left: 26px; top: 792px; width: 60px; height: 60px; border-radius: 50%; background: #e6e6e6; box-shadow: 0 1px 5px rgba(0, 0, 0, .7); display: flex; align-items: center; justify-content: center; padding-left: 5px; }
.track { position: absolute; left: 106px; top: 820px; width: 1158px; height: 8px; border-radius: 4px; background: #4a4d4b; display: flex; overflow: hidden; }
.track .done { width: 72px; background: #e6e6e6; }
.track .now { width: 6px; background: #90564c; }
.stamp { position: absolute; left: 138px; top: 772px; width: 225px; height: 36px; border-radius: 8px; background: #c99632; color: #fff; font-size: 19.500px; line-height: 37px; text-align: center; letter-spacing: .5px; box-shadow: 0 0 4px rgba(0, 0, 0, .6); }
.stamp::after { content: ""; position: absolute; left: 30px; top: 36px; border: 10px solid transparent; border-top-color: #c99632; border-bottom: 0; }
.legend { position: absolute; left: 0; bottom: 0; width: 1304px; height: 26px; display: flex; font-size: 18px; line-height: 27px; color: #fff; background: linear-gradient(90deg, #6671b2 20%, #4a70a0 25.500%, #5c94a8 31%, #5a9280 40%, #5fa14f 53%, #72a04a 56%, #9c8848 63%, #a0705f 69%, #81435a 75.500%, #915490 81%, #5f659c 87.500%, #62809c 93%); }
.legend span { flex: 1; text-align: center; }

.card { width: 841px; height: 1396px; border-radius: 50px 50px 0 0; background: #fff; padding: 40px 39px 0 40px; }
.regions { display: flex; height: 89px; margin: 0 -20px 0 10px; align-items: flex-start; }
.regions a { flex: none; height: 48px; line-height: 51px; font-size: 27px; font-weight: 800; letter-spacing: -.3px; color: #7b4f9d; white-space: nowrap; text-align: center; }
.regions a:nth-child(1) { width: 107px; border-radius: 10px; background: #2f1b3a; color: #fff; letter-spacing: -.7px; }
.regions a:nth-child(2) { width: 266px; }
.regions a:nth-child(3) { width: 202px; letter-spacing: -.6px; }
.regions a:nth-child(4) { width: 187px; }
.frame { width: 762px; border: 2px solid #e3e3e3; border-bottom: 0; height: 1267px; padding-left: 20px; font-family: "Noto Sans", "Open Sans", sans-serif; color: #000; }
.frame h3 { margin-top: 16px; height: 44px; line-height: 44px; font-size: 29.700px; font-weight: 600; color: #1f406d; white-space: nowrap; }
.place { margin-top: 29px; height: 36px; width: 245px; border-right: 2px solid #ccc; display: flex; align-items: center; gap: 13px; font-size: 24.500px; line-height: 32px; font-weight: 600; white-space: nowrap; }
.place svg { margin-top: 4px; }
.place span { margin-top: -3px; }
.seg { margin-top: 48px; width: 718px; height: 56px; border: 2px solid #2f7bc4; border-radius: 6px; display: grid; grid-template-columns: repeat(3, 1fr); text-align: center; line-height: 50px; color: #2f7bc4; font-size: 24.500px; font-weight: 600; }
.select { margin-top: 30px; width: 650px; height: 70px; border: 2px solid #aeaeae; border-radius: 5px; background: linear-gradient(#fafafa 40%, #e9e9e9); display: flex; justify-content: space-between; align-items: stretch; font-size: 25px; letter-spacing: -.5px; line-height: 64px; padding-left: 18px; }
.select i { width: 50px; border-left: 2px solid #aeaeae; display: flex; align-items: center; justify-content: center; }
.links { height: 58px; padding: 0 0 25px 2px; display: flex; align-items: center; font-size: 24px; color: #222; }
.ex { margin-left: 11px; width: 92px; }
.re { margin-left: 9px; }
.graph { display: block; margin-left: -18px; }
.ns { vector-effect: non-scaling-stroke; }
.axis { font: 21px "DejaVu Sans", sans-serif; fill: #666; }
.axis .big { font-size: 23px; }
.zone { margin-left: 255px; height: 36px; font: 23px/40px "DejaVu Sans", sans-serif; letter-spacing: -.15px; color: #666; white-space: nowrap; }
```
FILE: wind.js
```js
const canvas = document.querySelector('.wind');
const ctx = canvas.getContext('2d');
const xs = [0, 220, 440, 660, 820, 980, 1304];
const ys = [0, 196, 446, 676, 900];
// wind heading in degrees at each grid node, 0 = east, -90 = north
const heading = [
  [-85, -102, -95, -88, 20, 60, 62],
  [-82, -92, -82, -62, 20, 62, 65],
  [-86, -84, -74, -45, 15, 35, 55],
  [-86, -80, -64, -50, 10, 32, 32],
  [-82, -78, -66, -55, 30, 35, 35]
];
let seed = 7;
const random = () => (seed = (seed * 16807) % 2147483647) / 2147483647;
function cell(list, v) {
  let i = 0;
  while (i < list.length - 2 && v > list[i + 1]) i++;
  return [i, Math.min(1, Math.max(0, (v - list[i]) / (list[i + 1] - list[i])))];
}
function angle(x, y) {
  const [i, u] = cell(xs, x), [j, v] = cell(ys, y);
  const top = heading[j][i] * (1 - u) + heading[j][i + 1] * u;
  const low = heading[j + 1][i] * (1 - u) + heading[j + 1][i + 1] * u;
  return (top * (1 - v) + low * v) * Math.PI / 180;
}
ctx.lineCap = 'round';
for (let n = 0; n < 620; n++) {
  let x = random() * 1304, y = random() * 874;
  const speed = x < 600 ? 1 : .6;
  const alpha = .12 + random() * .36;
  const steps = 8;
  const step = (3 + random() * 7) * speed;
  for (let k = 0; k < steps; k++) {
    const a = angle(x, y), nx = x + Math.cos(a) * step, ny = y + Math.sin(a) * step;
    ctx.strokeStyle = `rgba(232,232,225,${alpha * (k + 1) / steps})`;
    ctx.lineWidth = 1.5 + 2.4 * k / steps;
    ctx.beginPath(); ctx.moveTo(x, y); ctx.lineTo(nx, ny); ctx.stroke();
    x = nx; y = ny;
  }
}
```
